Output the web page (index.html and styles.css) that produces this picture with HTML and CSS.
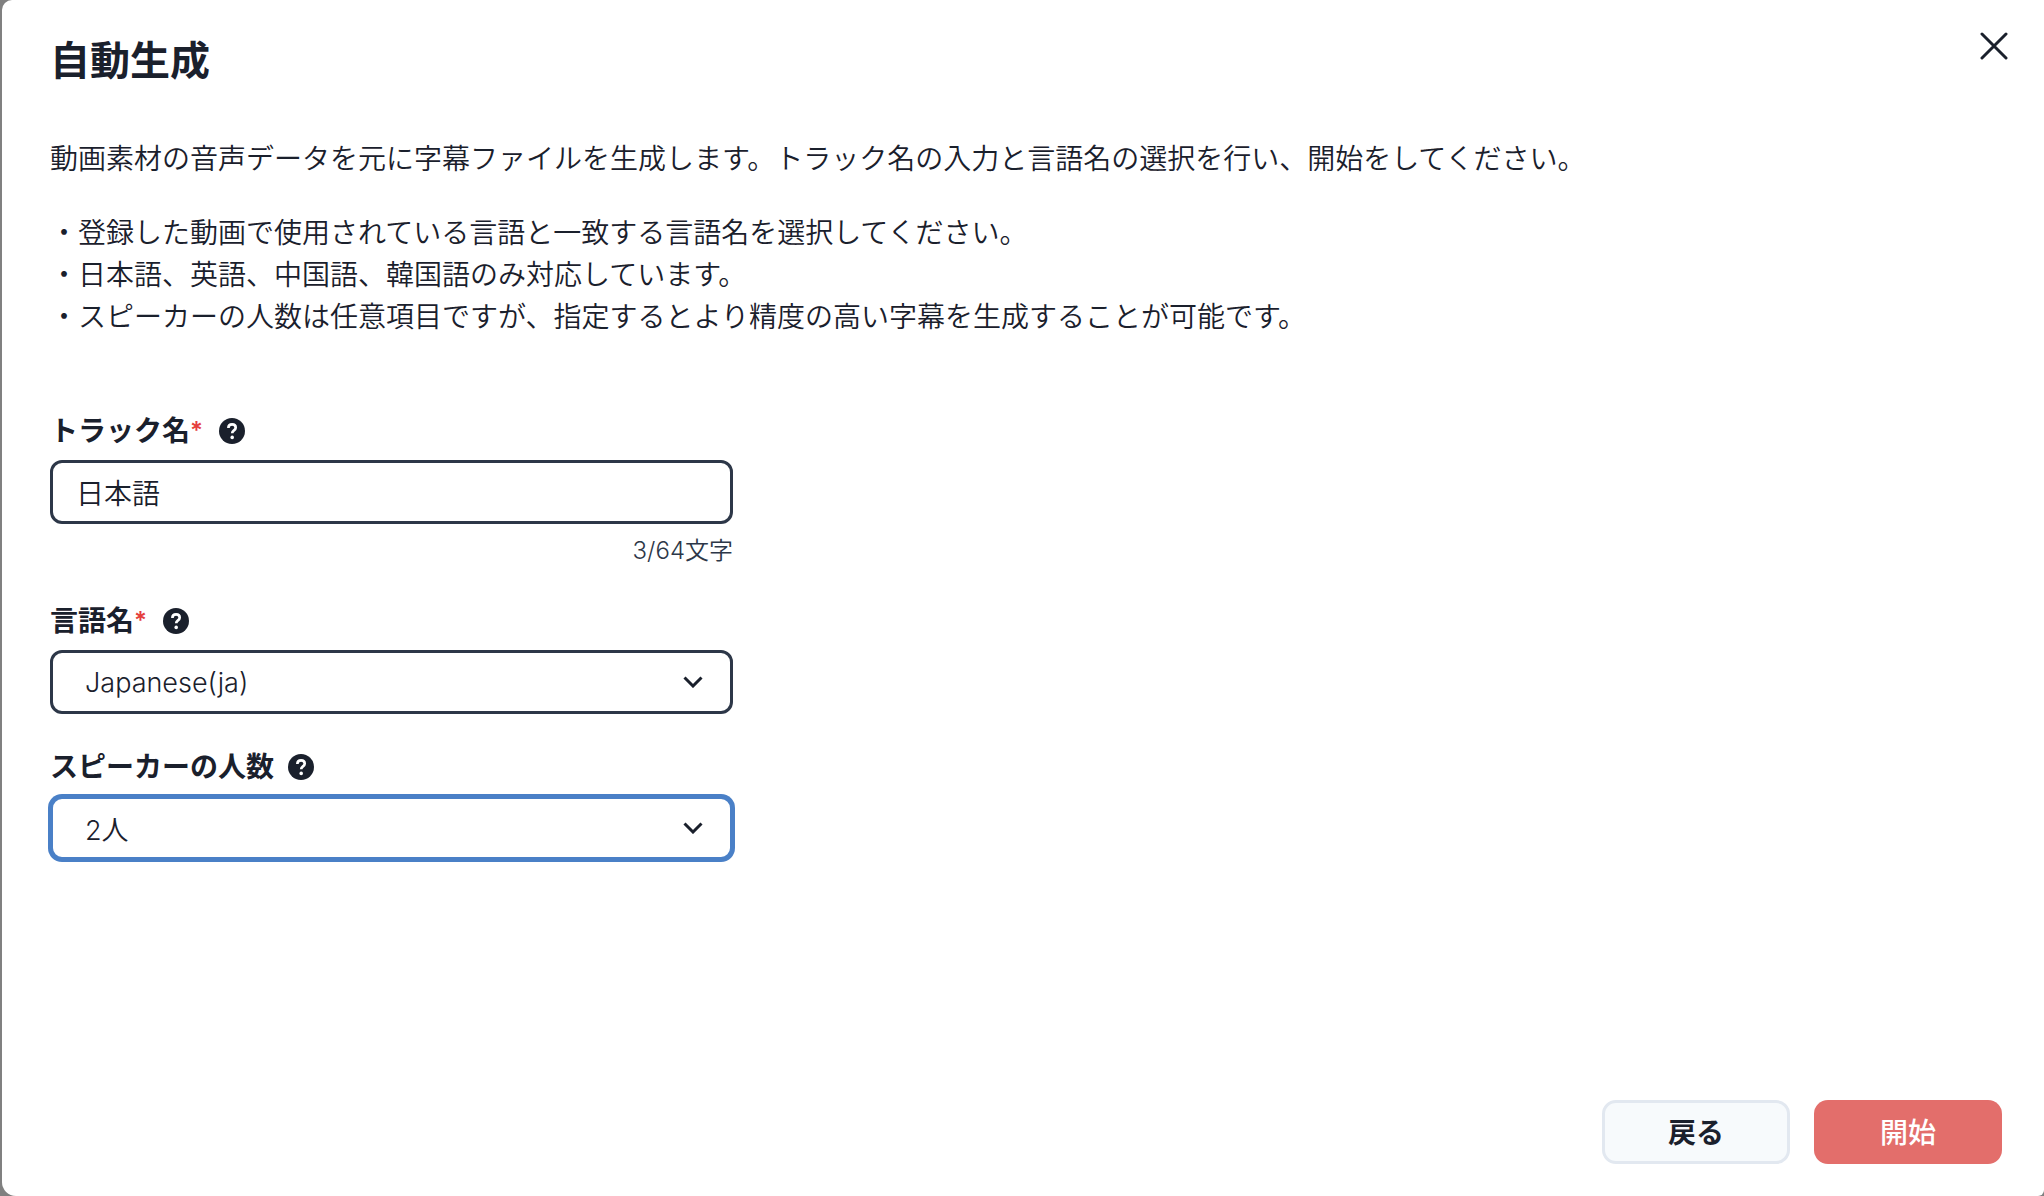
FILE: index.html
```html
<!DOCTYPE html>
<html lang="ja">
<head>
  <meta charset="UTF-8">
  <title>自動生成</title>
  <link rel="stylesheet" href="styles.css">
</head>
<body>
  <div class="modal">
    <header class="modal-header">
      <h1>自動生成</h1>
      <button class="close-btn" aria-label="閉じる">
        <svg width="28" height="28" viewBox="0 0 28 28"><path d="M2 2L26 26M26 2L2 26" fill="none" stroke="#1a202c" stroke-width="3" stroke-linecap="round"/></svg>
      </button>
    </header>
    <div class="modal-body">
      <p class="lead">動画素材の音声データを元に字幕ファイルを生成します。トラック名の入力と言語名の選択を行い、開始をしてください。</p>
      <ul class="notes">
        <li>・登録した動画で使用されている言語と一致する言語名を選択してください。</li>
        <li>・日本語、英語、中国語、韓国語のみ対応しています。</li>
        <li>・スピーカーの人数は任意項目ですが、指定するとより精度の高い字幕を生成することが可能です。</li>
      </ul>
      <form class="form">
        <div class="field field-track">
          <label class="label">トラック名<span class="req">*</span>
            <svg class="help" viewBox="0 0 26 26"><circle cx="13" cy="13" r="13" fill="#1a202c"/><path d="M9.4 10c0-2.2 1.5-3.6 3.7-3.6s3.6 1.3 3.6 3.3c0 1.5-1 2.2-2 2.9-1 .7-1.5 1.2-1.5 2.6" fill="none" stroke="#fff" stroke-width="2.7"/><circle cx="13.2" cy="19.4" r="1.8" fill="#fff"/></svg>
          </label>
          <input class="control" type="text" value="日本語">
          <div class="count">3/64文字</div>
        </div>
        <div class="field field-lang">
          <label class="label">言語名<span class="req">*</span>
            <svg class="help" viewBox="0 0 26 26"><circle cx="13" cy="13" r="13" fill="#1a202c"/><path d="M9.4 10c0-2.2 1.5-3.6 3.7-3.6s3.6 1.3 3.6 3.3c0 1.5-1 2.2-2 2.9-1 .7-1.5 1.2-1.5 2.6" fill="none" stroke="#fff" stroke-width="2.7"/><circle cx="13.2" cy="19.4" r="1.8" fill="#fff"/></svg>
          </label>
          <div class="control select">
            <span>Japanese(ja)</span>
            <svg class="chevron" viewBox="0 0 20 12"><path d="M1.5 1.5L10 10L18.5 1.5" fill="none" stroke="#1a202c" stroke-width="3"/></svg>
          </div>
        </div>
        <div class="field">
          <label class="label">スピーカーの人数
            <svg class="help" viewBox="0 0 26 26"><circle cx="13" cy="13" r="13" fill="#1a202c"/><path d="M9.4 10c0-2.2 1.5-3.6 3.7-3.6s3.6 1.3 3.6 3.3c0 1.5-1 2.2-2 2.9-1 .7-1.5 1.2-1.5 2.6" fill="none" stroke="#fff" stroke-width="2.7"/><circle cx="13.2" cy="19.4" r="1.8" fill="#fff"/></svg>
          </label>
          <div class="control select focused">
            <span>2人</span>
            <svg class="chevron" viewBox="0 0 20 12"><path d="M1.5 1.5L10 10L18.5 1.5" fill="none" stroke="#1a202c" stroke-width="3"/></svg>
          </div>
        </div>
      </form>
    </div>
    <footer class="modal-footer">
      <button class="btn btn-back">戻る</button>
      <button class="btn btn-start">開始</button>
    </footer>
  </div>
</body>
</html>
```

FILE: styles.css
```css
* {
  box-sizing: border-box;
}
html, body {
  height: 100%;
}
body {
  margin: 0;
  background-color: #808080;
  color: #1a202c;
  font-family: Inter, "Noto Sans CJK JP", sans-serif;
  font-size: 28px;
  font-weight: 350;
  overflow: hidden;
}
.modal {
  display: flex;
  flex-direction: column;
  height: 100%;
  margin-left: 2px;
  background: white;
  border-radius: 10px 0 6px 14px;
}
.modal-header {
  display: flex;
  justify-content: space-between;
  padding: 33px 36px 0 48px;
}
.modal-header h1 {
  margin: 0;
  font-size: 40px;
  font-weight: 700;
  line-height: 56px;
}
.close-btn {
  border: none;
  background: none;
  padding: 0;
  height: 28px;
  margin-top: -1px;
}
.modal-body {
  flex: 1;
  padding: 49px 0 0 48px;
}
.lead {
  margin: 0;
  line-height: 42px;
}
.notes {
  list-style: none;
  margin: 32px 0 0;
  padding: 0;
  line-height: 42px;
}
.form {
  margin-top: 72px;
  width: 683px;
}
.field-track {
  margin-bottom: 31px;
}
.field-lang {
  margin-bottom: 32px;
}
.label {
  display: flex;
  align-items: center;
  font-weight: 600;
  line-height: 40px;
  padding-top: 1px;
  margin-bottom: 9px;
}
.req {
  color: #e53e3e;
  font-size: 24px;
  margin-right: 2px;
}
.help {
  width: 26px;
  height: 26px;
  margin-left: 14px;
}
.control {
  display: block;
  width: 100%;
  height: 64px;
  border: 3px solid #2d3748;
  border-radius: 12px;
  background: white;
  color: #1a202c;
  font: inherit;
  padding: 0 23px;
}
.select {
  display: flex;
  align-items: center;
  justify-content: space-between;
  padding: 0 27px 0 32px;
  font-size: 27px;
}
.focused {
  border-color: #4a80c7;
  box-shadow: 0 0 0 2px #4a80c7;
}
.chevron {
  width: 20px;
  height: 12px;
}
.count {
  text-align: right;
  font-size: 24px;
  line-height: 36px;
  margin-top: 9px;
  color: #2d3748;
}
.modal-footer {
  display: flex;
  justify-content: flex-end;
  gap: 24px;
  padding: 0 42px 32px 0;
}
.btn {
  width: 188px;
  height: 64px;
  border-radius: 14px;
  font: inherit;
  font-weight: 600;
  padding: 0 0 2px;
}
.btn-back {
  background: #f7fafc;
  border: 3px solid #e2e8f0;
  color: #1a202c;
}
.btn-start {
  background: #e36e6b;
  border: none;
  color: white;
  font-weight: 500;
}
```
